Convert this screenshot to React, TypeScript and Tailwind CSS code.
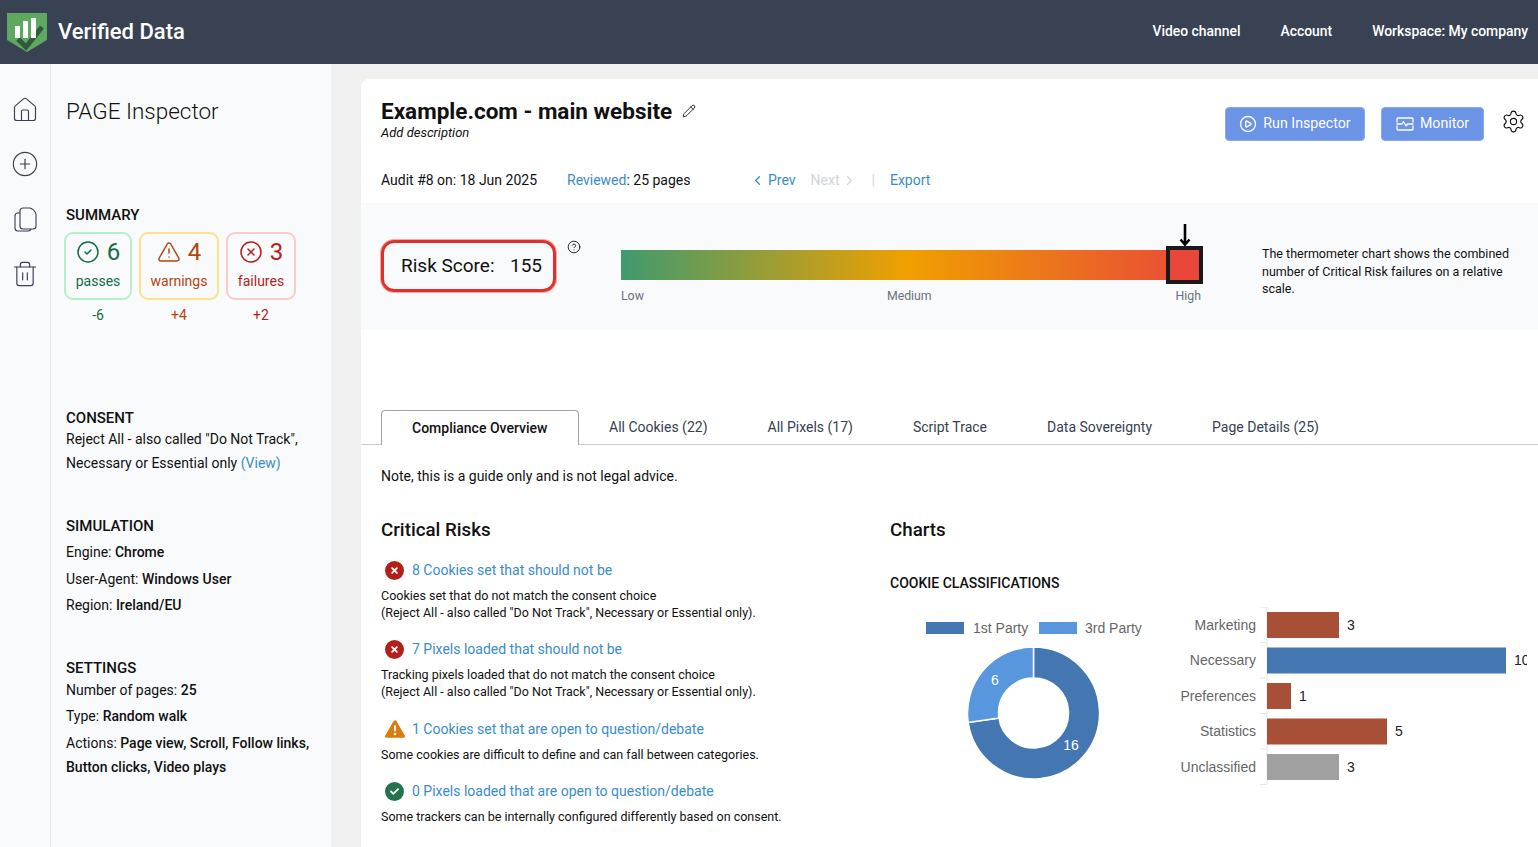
import { CircleCheck, CircleHelp, CirclePlay, CirclePlus, ChevronLeft, ChevronRight, CircleX, House, Pencil, Settings, Trash2, TriangleAlert } from "lucide-react";
import { FaCircleCheck, FaCircleXmark, FaTriangleExclamation } from "react-icons/fa6";

const ROBOTO = "font-['Roboto',sans-serif]";

const BARS = [
  { label: "Marketing", value: 3, width: 72, color: "#a84f37" },
  { label: "Necessary", value: 10, width: 239, color: "#4477b2" },
  { label: "Preferences", value: 1, width: 24, color: "#a84f37" },
  { label: "Statistics", value: 5, width: 120, color: "#a84f37" },
  { label: "Unclassified", value: 3, width: 72, color: "#a0a0a0" },
];

function Logo() {
  return (
    <svg width="40" height="39" viewBox="0 0 40 39" className="shrink-0">
      <path d="M0 0H40V27L20 39L0 27Z" fill="#5fa862" />
      <path d="M11 26L19 34L35 14" fill="none" stroke="#2f5a3c" strokeWidth="5" />
      <rect x="8" y="13" width="5" height="12" fill="#fff" />
      <rect x="16" y="8" width="5" height="17" fill="#fff" />
      <rect x="24" y="5" width="5" height="20" fill="#fff" />
    </svg>
  );
}

function MonitorIcon() {
  return (
    <svg width="18" height="14" viewBox="0 0 18 14" fill="none" stroke="#fff" strokeWidth="1.3" strokeLinecap="round" strokeLinejoin="round">
      <path d="M1 5V2a1 1 0 0 1 1-1h14a1 1 0 0 1 1 1v3" />
      <path d="M1 9v3a1 1 0 0 0 1 1h14a1 1 0 0 0 1-1V9" />
      <path d="M1 7h5l1.5-2.5L10 9l1.5-2H17" />
    </svg>
  );
}

function CopiesIcon() {
  return (
    <svg width="23" height="25" viewBox="0 0 23 25" fill="none" stroke="#374151" strokeWidth="1.1" strokeLinejoin="round">
      <path d="M6 4a3 3 0 0 1 3-3h7c3 1 5 3 6 6v12a3 3 0 0 1-3 3H9a3 3 0 0 1-3-3z" />
      <path d="M6 6H4a3 3 0 0 0-3 3v12a3 3 0 0 0 3 3h10a3 3 0 0 0 3-2" />
    </svg>
  );
}

function StatCard({ icon, count, label, delta, width, box, text }: { icon: React.ReactNode; count: number; label: string; delta: string; width: string; box: string; text: string }) {
  return (
    <div className={`flex flex-col items-center ${width}`}>
      <div className={`flex h-[68px] w-full flex-col items-center rounded-[9px] border-2 pt-[4px] ${box} ${text}`}>
        <div className="flex h-[27px] items-center gap-[7px] text-[24px]">
          {icon}
          <span>{count}</span>
        </div>
        <span className="mt-[6px] text-[14px] leading-5">{label}</span>
      </div>
      <span className={`mt-[5px] text-[14px] leading-5 ${text}`}>{delta}</span>
    </div>
  );
}

function RiskItem({ icon, title, lines, className }: { icon: React.ReactNode; title: string; lines: string[]; className: string }) {
  return (
    <div className={className}>
      <div className="flex h-5 items-center">
        <span className="flex w-[31px] justify-center pl-[1px] pr-[5px]">{icon}</span>
        <a className="text-[14px] text-[#3a8cc9]">{title}</a>
      </div>
      <div className="mt-[6.5px] text-[12.5px] leading-[17.5px] text-[#111]">
        {lines.map((line) => (
          <p key={line}>{line}</p>
        ))}
      </div>
    </div>
  );
}

function DonutChart() {
  return (
    <svg width="270" height="190" viewBox="0 0 270 190" className="shrink-0 font-['Liberation_Sans',sans-serif]">
      <rect x="36" y="15" width="38" height="12" fill="#4477b2" />
      <text x="83" y="26" fontSize="14" fill="#666">1st Party</text>
      <rect x="149" y="15" width="38" height="12" fill="#5896de" />
      <text x="195" y="26" fontSize="14" fill="#666">3rd Party</text>
      <path d="M143.5 40A66 66 0 1 1 78.2 115.4L108.9 111A35 35 0 1 0 143.5 71Z" fill="#4477b2" stroke="#fff" strokeWidth="1.5" />
      <path d="M143.5 40A66 66 0 0 0 78.2 115.4L108.9 111A35 35 0 0 1 143.5 71Z" fill="#5896de" stroke="#fff" strokeWidth="1.5" />
      <text x="105" y="78" fontSize="14" fill="#fff" textAnchor="middle">6</text>
      <text x="181" y="143" fontSize="14" fill="#fff" textAnchor="middle">16</text>
    </svg>
  );
}

function BarChart() {
  return (
    <svg width="367" height="190" viewBox="0 0 367 190" className="shrink-0 font-['Liberation_Sans',sans-serif]">
      <path d="M107 0V177.5" stroke="#e6e6e6" />
      {BARS.map((bar, i) => (
        <g key={bar.label}>
          <path d={`M100 ${i * 35.5}H107`} stroke="#e6e6e6" />
          <text x="96" y={i * 35.5 + 22.5} fontSize="14" fill="#666" textAnchor="end">{bar.label}</text>
          <rect x="107" y={i * 35.5 + 5} width={bar.width} height="26" fill={bar.color} />
          <text x={107 + bar.width + 8} y={i * 35.5 + 22.5} fontSize="14" fill="#222">{bar.value}</text>
        </g>
      ))}
      <path d="M100 177.5H107" stroke="#e6e6e6" />
    </svg>
  );
}

export default function App() {
  return (
    <div className={`flex h-[847px] flex-col overflow-hidden bg-[#f0f0f0] ${ROBOTO}`}>
      {/* Top bar */}
      <header className="flex h-16 shrink-0 items-center justify-between bg-[#394253] pl-[7px] pr-[10px] text-white">
        <div className="flex items-center gap-[11px]">
          <Logo />
          <span className="-mt-[2px] text-[22px] font-medium">Verified Data</span>
        </div>
        <nav className="-mt-[2px] flex items-center gap-10 text-[13.9px] font-medium">
          <a>Video channel</a>
          <a>Account</a>
          <a>Workspace: My company</a>
        </nav>
      </header>

      <div className="flex min-h-0 flex-1">
        {/* Icon rail */}
        <div className="flex w-[51px] shrink-0 flex-col items-center gap-[26px] border-r border-[#e5e7eb] bg-[#f9fafb] pt-[32px] text-[#374151]">
          <House size={28} strokeWidth={1} />
          <CirclePlus size={28} strokeWidth={1} />
          <div className="flex h-[30px] items-center">
            <CopiesIcon />
          </div>
          <Trash2 size={28} strokeWidth={1} />
        </div>

        {/* Side panel */}
        <aside className="w-[280px] shrink-0 bg-[#f9fafb] pl-[15px] pr-3 text-[14px] text-[#111]">
          <h1 className="mt-[33px] text-[22.5px] font-light leading-7">PAGE Inspector</h1>

          <h2 className="mt-[80px] text-[15px] font-medium leading-5">SUMMARY</h2>
          <div className="-ml-[2px] mt-[7px] flex gap-[7px]">
            <StatCard icon={<CircleCheck size={24} strokeWidth={1.5} />} count={6} label="passes" delta="-6" width="w-[68px]" box="border-[#b7efcd]" text="text-[#166c45]" />
            <StatCard icon={<TriangleAlert size={24} strokeWidth={1.5} />} count={4} label="warnings" delta="+4" width="w-[80px]" box="border-[#fde28a]" text="text-[#b4450f]" />
            <StatCard icon={<CircleX size={24} strokeWidth={1.5} />} count={3} label="failures" delta="+2" width="w-[70px]" box="border-[#fbcaca]" text="text-[#b91c1c]" />
          </div>

          <h2 className="mt-[83px] text-[15px] font-medium leading-5">CONSENT</h2>
          <p className="-mt-[1px] leading-6">
            Reject All - also called "Do Not Track",
            <br />
            Necessary or Essential only <a className="text-[#3a8cc9]">(View)</a>
          </p>

          <h2 className="mt-[41px] text-[15px] font-medium leading-5">SIMULATION</h2>
          <div className="mt-[3px] leading-[26.5px]">
            <p>Engine: <b className="font-medium">Chrome</b></p>
            <p>User-Agent: <b className="font-medium">Windows User</b></p>
            <p>Region: <b className="font-medium">Ireland/EU</b></p>
          </div>

          <h2 className="mt-[39px] text-[15px] font-medium leading-5">SETTINGS</h2>
          <div>
            <p className="leading-6">Number of pages: <b className="font-medium">25</b></p>
            <p className="mt-[1.5px] leading-[26.5px]">Type: <b className="font-medium">Random walk</b></p>
            <p className="mt-[1.5px] leading-6">
              Actions: <b className="font-medium">Page view, Scroll, Follow links,</b>
              <br />
              <b className="font-medium">Button clicks, Video plays</b>
            </p>
          </div>
        </aside>

        {/* Main card */}
        <div className="min-w-0 flex-1 pl-[30px] pt-[15px]">
          <main className="h-full overflow-hidden rounded-tl-lg bg-white text-[#111]">
            <div className="px-5 pt-[18px]">
              <div className="flex justify-between">
                <div>
                  <div className="flex items-center gap-[10px]">
                    <h2 className="text-[22.5px] font-bold leading-7 text-[#111]">Example.com - main website</h2>
                    <Pencil size={14} strokeWidth={1.5} />
                  </div>
                  <p className="text-[13px] italic leading-[15px]">Add description</p>
                </div>
                <div className="-mr-[8px] flex items-start">
                  <button className="mt-[10px] flex h-[34px] w-[140px] items-center justify-center gap-[6px] rounded border border-[#8aaaf0] bg-[#6b93e6] text-[14.2px] text-white">
                    <CirclePlay size={18} strokeWidth={1.75} />
                    Run Inspector
                  </button>
                  <button className="ml-[16px] mt-[10px] flex h-[34px] w-[103px] items-center justify-center gap-[6px] rounded border border-[#8aaaf0] bg-[#6b93e6] text-[14.2px] text-white">
                    <MonitorIcon />
                    Monitor
                  </button>
                  <Settings size={25} strokeWidth={1.1} className="ml-[17px] mt-[12px]" />
                </div>
              </div>

              <div className="mt-[29px] flex h-5 items-center text-[14px]">
                <span className="w-[186px]">Audit #8 on: 18 Jun 2025</span>
                <span className="w-[183px]"><a className="text-[#3a8cc9]">Reviewed</a>: 25 pages</span>
                <a className="flex items-center gap-[3px] text-[#3a8cc9]"><ChevronLeft size={15} />Prev</a>
                <a className="ml-[15px] flex items-center gap-[2px] text-[#d1d5db]">Next<ChevronRight size={15} /></a>
                <span className="ml-[15px] text-[#d1d5db]">|</span>
                <a className="ml-[15px] text-[#3a8cc9]">Export</a>
              </div>
            </div>

            {/* Risk score */}
            <section className="mt-[13px] flex h-[127px] bg-[#f9fafb] pl-5">
              <div className="mt-[37px] flex h-[52px] w-[175px] items-center justify-between rounded-[13px] border-[3px] border-[#e0302c] pl-[17px] pr-[11px] text-[19px] shadow-[0_0_0_1px_#f4a9a6]">
                <span>Risk Score:</span>
                <span>155</span>
              </div>
              <CircleHelp size={14} strokeWidth={1.5} className="ml-[11px] mt-[37px]" />
              <div className="ml-10 mt-[47px] w-[582px]">
                <div className="relative h-[30px] bg-[linear-gradient(90deg,#3f9a6e_0%,#f0a000_49%,#e8473a_100%)]">
                  <div className="absolute -top-[4px] right-0 h-[38px] w-[37px] border-[4px] border-[#1a1a1a] bg-[#e8473a]" />
                  <svg width="12" height="23" viewBox="0 0 12 23" className="absolute -top-[26px] right-[12px]">
                    <path d="M6 0V20M1.5 15.5L6 20.5L10.5 15.5" fill="none" stroke="#000" strokeWidth="2.6" />
                  </svg>
                </div>
                <div className="mt-[6px] flex justify-between pr-[2px] text-[12.3px] leading-5 text-[#6b7280]">
                  <span className="w-[25px]">Low</span>
                  <span className="mr-[3px]">Medium</span>
                  <span>High</span>
                </div>
              </div>
              <p className="ml-[59px] mt-[42px] w-[260px] text-[12.5px] leading-[17.5px]">
                The thermometer chart shows the combined number of Critical Risk failures on a relative scale.
              </p>
            </section>

            {/* Tabs */}
            <div className="mt-[80px] flex h-[35px] border-b border-[#c9ccd1] pl-5 text-[14px] text-[#374151]">
              <div className="flex h-[35px] w-[198px] items-center rounded-t-[4px] border border-b-0 border-[#9ca3af] bg-white px-[30px] font-medium text-[#111]">Compliance Overview</div>
              <div className="flex items-center px-[30px]">All Cookies (22)</div>
              <div className="flex items-center px-[30px]">All Pixels (17)</div>
              <div className="flex items-center px-[30px]">Script Trace</div>
              <div className="flex items-center px-[30px]">Data Sovereignty</div>
              <div className="flex items-center px-[30px]">Page Details (25)</div>
            </div>

            <div className="px-5">
              <p className="mt-[21px] text-[14px] leading-5">Note, this is a guide only and is not legal advice.</p>
              <div className="mt-[30px] flex">
                <div className="w-[509px] shrink-0">
                  <h3 className="text-[18.75px] font-medium leading-7">Critical Risks</h3>
                  <RiskItem
                    className="mt-[16px]"
                    icon={<FaCircleXmark size={19} className="text-[#b3201c]" />}
                    title="8 Cookies set that should not be"
                    lines={["Cookies set that do not match the consent choice", '(Reject All - also called "Do Not Track", Necessary or Essential only).']}
                  />
                  <RiskItem
                    className="mt-[17.5px]"
                    icon={<FaCircleXmark size={19} className="text-[#b3201c]" />}
                    title="7 Pixels loaded that should not be"
                    lines={["Tracking pixels loaded that do not match the consent choice", '(Reject All - also called "Do Not Track", Necessary or Essential only).']}
                  />
                  <RiskItem
                    className="mt-[18.5px]"
                    icon={<FaTriangleExclamation size={20} className="text-[#dd7a0c]" />}
                    title="1 Cookies set that are open to question/debate"
                    lines={["Some cookies are difficult to define and can fall between categories."]}
                  />
                  <RiskItem
                    className="mt-[18px]"
                    icon={<FaCircleCheck size={19} className="text-[#23734f]" />}
                    title="0 Pixels loaded that are open to question/debate"
                    lines={["Some trackers can be internally configured differently based on consent."]}
                  />
                </div>
                <div className="min-w-0 flex-1">
                  <h3 className="text-[18.75px] font-medium leading-7">Charts</h3>
                  <h4 className="mt-[29px] text-[14px] font-medium leading-5">COOKIE CLASSIFICATIONS</h4>
                  <div className="mt-[14px] flex">
                    <DonutChart />
                    <BarChart />
                  </div>
                </div>
              </div>
            </div>
          </main>
        </div>
      </div>
    </div>
  );
}
